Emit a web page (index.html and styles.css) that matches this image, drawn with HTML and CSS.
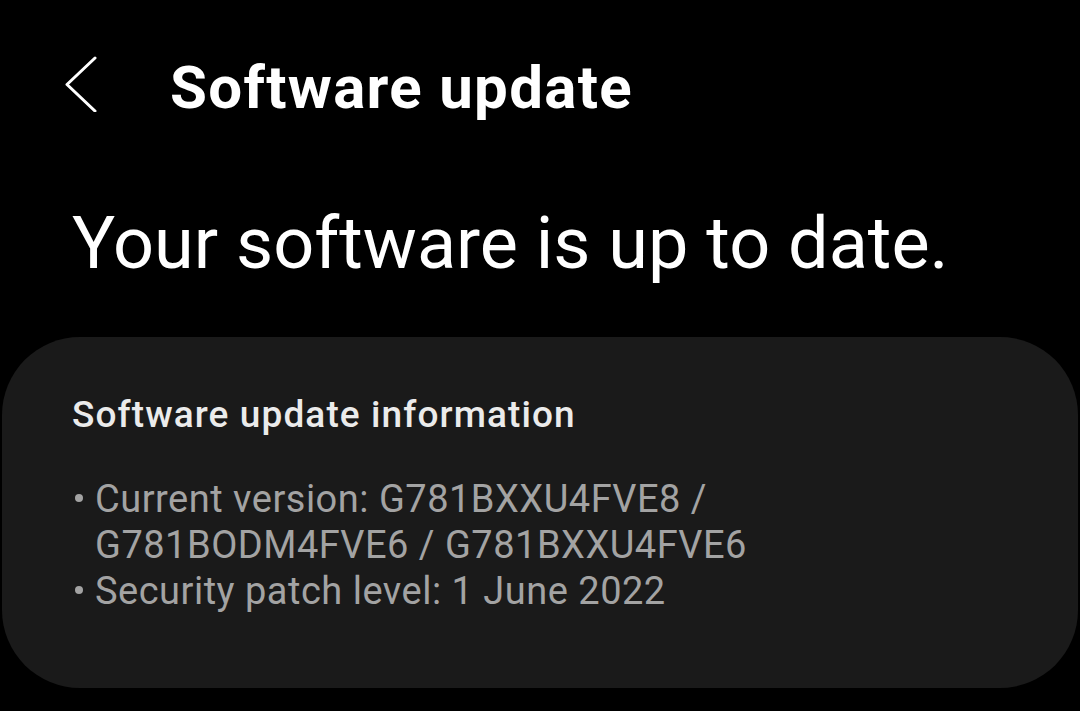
FILE: index.html
```html
<!DOCTYPE html>
<html lang="en">
<head>
    <meta charset="UTF-8">
    <meta name="viewport" content="width=device-width, initial-scale=1.0">
    <title>Software update</title>
    <link rel="stylesheet" href="styles.css">
</head>
<body>
    <header class="app-bar">
        <button class="back-btn" aria-label="Back">
            <svg width="34" height="56" viewBox="0 0 34 56">
                <path d="M31 2 L3 28.5 L31 55" fill="none" stroke="#fff" stroke-width="3" stroke-linecap="round" stroke-linejoin="round"/>
            </svg>
        </button>
        <h1 class="title">Software update</h1>
    </header>

    <p class="status">Your software is up to date.</p>

    <section class="info-card">
        <h2 class="info-title">Software update information</h2>
        <ul class="info-list">
            <li>Current version: G781BXXU4FVE8 / G781BODM4FVE6 / G781BXXU4FVE6</li>
            <li>Security patch level: 1 June 2022</li>
        </ul>
    </section>
</body>
</html>
```

FILE: styles.css
```css
* {
    margin: 0;
    padding: 0;
    box-sizing: border-box;
}

body {
    font-family: Roboto, "Liberation Sans", sans-serif;
    background: #000000;
    color: #ffffff;
    width: 1080px;
    height: 711px;
    overflow: hidden;
}

.app-bar {
    display: flex;
    align-items: center;
    height: 168px;
    padding-left: 64px;
}

.back-btn {
    background: none;
    border: none;
    display: flex;
    width: 106px;
}

.title {
    font-size: 60px;
    font-weight: 700;
    letter-spacing: 1.3px;
    margin-top: 6px;
}

.status {
    font-size: 72px;
    font-weight: 400;
    padding-left: 72px;
    line-height: 1;
    margin-top: 40px;
}

.info-card {
    background: #1a1a1a;
    margin: 57px 2px 0 2px;
    border-radius: 78px;
    height: 351px;
    padding: 56px 70px 0 70px;
}

.info-title {
    font-size: 37px;
    line-height: 44px;
    font-weight: 500;
    letter-spacing: 1.1px;
    color: #ebebeb;
}

.info-list {
    list-style: none;
    margin-top: 39px;
    color: #a3a3a3;
    font-size: 38px;
    line-height: 46px;
    letter-spacing: 0.5px;
}

.info-list li {
    position: relative;
    padding-left: 23px;
    max-width: 724px;
}

.info-list li::before {
    content: "";
    position: absolute;
    left: 3px;
    top: 18px;
    width: 8px;
    height: 8px;
    border-radius: 50%;
    background: #a3a3a3;
}
```
